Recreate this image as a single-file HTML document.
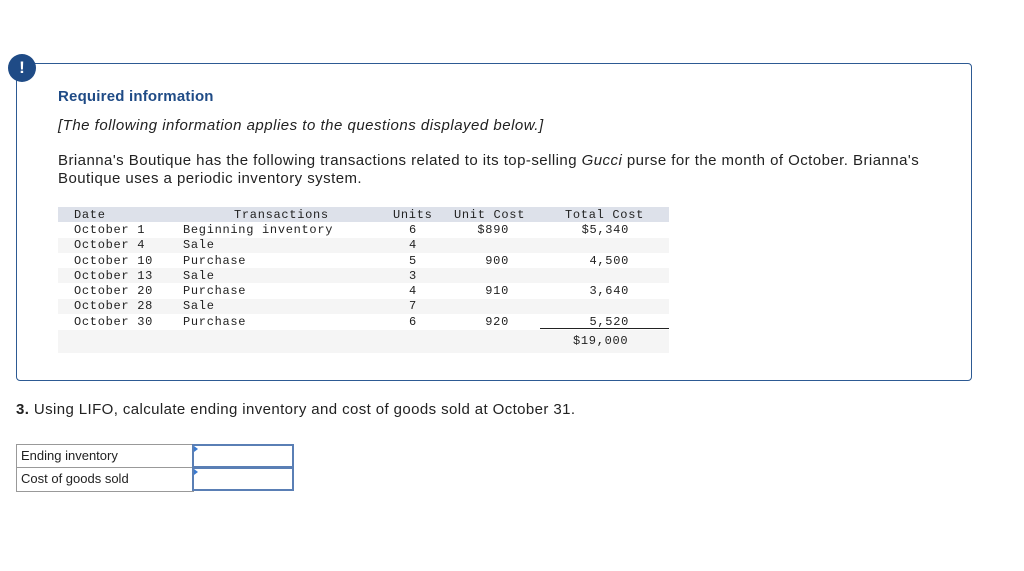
<!DOCTYPE html>
<html><head><style>
body{margin:0;width:1024px;height:571px;background:#fff;position:relative;font-family:"Liberation Sans",Arial,sans-serif;color:#222;overflow:hidden}
.box{position:absolute;left:16px;top:63px;width:954px;height:316px;border:1px solid #2d5a93;border-radius:4px}
.ic{position:absolute;left:8px;top:54px;width:28px;height:28px;border-radius:50%;background:#1f4b86;color:#fff;font-weight:bold;font-size:17px;text-align:center;line-height:28px}
.t{position:absolute;white-space:nowrap}
.mono{font-family:"Liberation Mono","DejaVu Sans Mono",monospace;font-size:12px;letter-spacing:0.7px;color:#222}
.row{position:absolute;left:58px;width:611px;height:15.3px}
</style></head><body>
<div class="box"></div>
<div class="ic">!</div>
<div class="t" style="left:58px;top:88px;font-size:15px;font-weight:bold;color:#1f4b86;letter-spacing:0.2px">Required information</div>
<div class="t" style="left:58px;top:117px;font-size:15px;font-style:italic;letter-spacing:0.5px">[The following information applies to the questions displayed below.]</div>
<div class="t" style="left:58px;top:152px;font-size:15px;line-height:18px;letter-spacing:0.45px">Brianna's Boutique has the following transactions related to its top-selling <i>Gucci</i> purse for the month of October. Brianna's<br>Boutique uses a periodic inventory system.</div>

<div class="row" style="top:207px;background:#dde1ea"></div>
<div class="row" style="top:237.6px;background:#f5f5f5"></div>
<div class="row" style="top:268.2px;background:#f5f5f5"></div>
<div class="row" style="top:298.8px;background:#f5f5f5"></div>
<div class="row" style="top:330px;height:23px;background:#f5f5f5"></div>
<div style="position:absolute;left:540px;top:328px;width:129px;height:1px;background:#222"></div>

<div class="mono">
<div class="t" style="left:74px;top:208px">Date</div>
<div class="t" style="left:234px;top:208px">Transactions</div>
<div class="t" style="left:393px;top:208px">Units</div>
<div class="t" style="left:454px;top:208px">Unit Cost</div>
<div class="t" style="left:565px;top:208px">Total Cost</div>
</div>
<div class="mono" style="position:absolute;left:0;top:223px;width:1024px;height:120px;line-height:15.3px">
<div class="t" style="left:74px">October 1<br>October 4<br>October 10<br>October 13<br>October 20<br>October 28<br>October 30</div>
<div class="t" style="left:183px">Beginning inventory<br>Sale<br>Purchase<br>Sale<br>Purchase<br>Sale<br>Purchase</div>
<div class="t" style="left:409px">6<br>4<br>5<br>3<br>4<br>7<br>6</div>
<div class="t" style="right:515px;text-align:right">$890<br>&nbsp;<br>900<br>&nbsp;<br>910<br>&nbsp;<br>920</div>
<div class="t" style="right:395px;text-align:right">$5,340<br>&nbsp;<br>4,500<br>&nbsp;<br>3,640<br>&nbsp;<br>5,520</div>
</div>
<div class="t mono" style="left:573px;top:334px">$19,000</div>

<div class="t" style="left:16px;top:401px;font-size:15px;letter-spacing:0.4px"><b>3.</b> Using LIFO, calculate ending inventory and cost of goods sold at October 31.</div>

<div style="position:absolute;left:16px;top:444px;width:176px;height:46px;border:1px solid #999"></div>
<div style="position:absolute;left:16px;top:467px;width:176px;height:1px;background:#999"></div>
<div class="t" style="left:21px;top:448px;font-size:13px">Ending inventory</div>
<div class="t" style="left:21px;top:471px;font-size:13px">Cost of goods sold</div>
<div style="position:absolute;left:192px;top:444px;width:98px;height:20px;border:2px solid #5a7fb5"></div>
<div style="position:absolute;left:192px;top:467px;width:98px;height:20px;border:2px solid #5a7fb5"></div>
<div style="position:absolute;left:194px;top:446px;width:0;height:0;border-top:3px solid transparent;border-bottom:3px solid transparent;border-left:4px solid #3a7ad0"></div>
<div style="position:absolute;left:194px;top:469px;width:0;height:0;border-top:3px solid transparent;border-bottom:3px solid transparent;border-left:4px solid #3a7ad0"></div>
</body></html>
